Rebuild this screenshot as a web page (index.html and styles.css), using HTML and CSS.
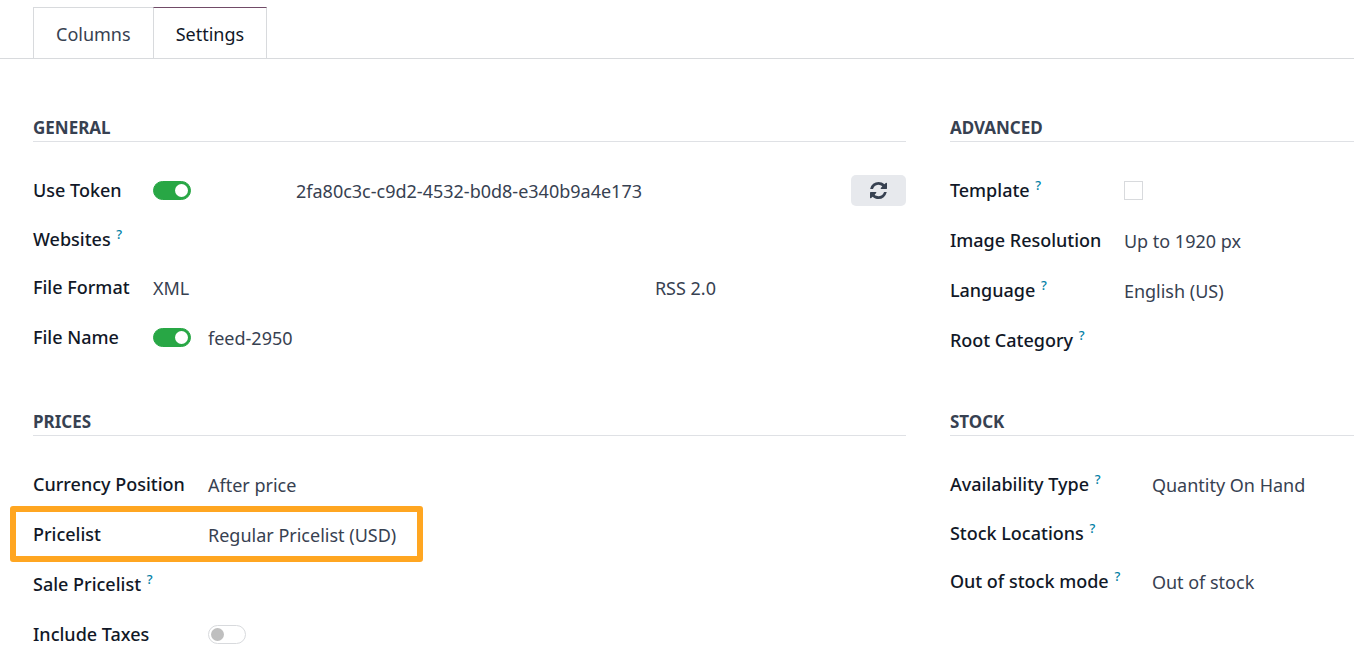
FILE: index.html
```html
<!DOCTYPE html>
<html lang="en">
  <head>
    <meta charset="UTF-8" />
    <meta name="viewport" content="width=device-width, initial-scale=1.0" />
    <title>Feed Settings</title>
    <link rel="stylesheet" href="styles.css">
  </head>
  <body>
    <nav class="tabs">
      <a href="#columns" class="tab">Columns</a>
      <a href="#settings" class="tab active">Settings</a>
    </nav>

    <main class="settings" id="settings">
      <section class="group general">
        <h2>General</h2>
        <div class="row">
          <label class="name" for="useToken">Use Token</label>
          <div class="token">
            <input type="checkbox" class="toggle" id="useToken" checked />
            <span class="value">2fa80c3c-c9d2-4532-b0d8-e340b9a4e173</span>
            <button class="refresh" type="button" aria-label="Refresh token">
              <svg viewBox="0 0 1536 1536" width="17" height="17" fill="currentColor">
                <path d="M1511 928q0 5-1 7-64 268-268 434.500t-478 166.500q-146 0-282.500-55t-243.500-157l-129 129q-19 19-45 19t-45-19-19-45v-448q0-26 19-45t45-19h448q26 0 45 19t19 45-19 45l-137 137q71 66 161 102t187 36q134 0 250-65t186-179q11-17 53-117 8-23 30-23h192q13 0 22.500 9.500t9.500 22.500zM1536 128v448q0 26-19 45t-45 19h-448q-26 0-45-19t-19-45 19-45l138-138q-148-137-349-137-134 0-250 65t-186 179q-11 17-53 117-8 23-30 23h-199q-13 0-22.500-9.500t-9.500-22.500v-7q65-268 270-434.500t480-166.500q146 0 284 55.500t245 156.500l130-129q19-19 45-19t45 19 19 45z" />
              </svg>
            </button>
          </div>
        </div>
        <div class="row short">
          <span class="name">Websites <sup>?</sup></span>
        </div>
        <div class="row">
          <span class="name">File Format</span>
          <div class="format">
            <span class="value">XML</span>
            <span class="value">RSS 2.0</span>
          </div>
        </div>
        <div class="row">
          <label class="name" for="fileName">File Name</label>
          <div class="file">
            <input type="checkbox" class="toggle" id="fileName" checked />
            <span class="value">feed-2950</span>
          </div>
        </div>
      </section>

      <section class="group advanced">
        <h2>Advanced</h2>
        <div class="row">
          <label class="name" for="template">Template <sup>?</sup></label>
          <input type="checkbox" class="check" id="template" />
        </div>
        <div class="row">
          <span class="name">Image Resolution</span>
          <span class="value">Up to 1920 px</span>
        </div>
        <div class="row">
          <span class="name">Language <sup>?</sup></span>
          <span class="value">English (US)</span>
        </div>
        <div class="row">
          <span class="name">Root Category <sup>?</sup></span>
        </div>
      </section>

      <section class="group prices">
        <h2>Prices</h2>
        <div class="row">
          <span class="name">Currency Position</span>
          <span class="value">After price</span>
        </div>
        <div class="row highlight">
          <span class="name">Pricelist</span>
          <span class="value">Regular Pricelist (USD)</span>
        </div>
        <div class="row">
          <span class="name">Sale Pricelist <sup>?</sup></span>
        </div>
        <div class="row">
          <label class="name" for="taxes">Include Taxes</label>
          <input type="checkbox" class="toggle" id="taxes" />
        </div>
      </section>

      <section class="group stock">
        <h2>Stock</h2>
        <div class="row">
          <span class="name">Availability Type <sup>?</sup></span>
          <span class="value">Quantity On Hand</span>
        </div>
        <div class="row short">
          <span class="name">Stock Locations <sup>?</sup></span>
        </div>
        <div class="row">
          <span class="name">Out of stock mode <sup>?</sup></span>
          <span class="value">Out of stock</span>
        </div>
      </section>
    </main>
  </body>
</html>
```

FILE: styles.css
```css
* {
  box-sizing: border-box;
}

body {
  margin: 0;
  font-family: "Noto Sans", "Open Sans", sans-serif;
  font-size: 18px;
  line-height: 24px;
  color: #374151;
  background-color: #ffffff;
  overflow-x: hidden;
}

/* Tabs */
.tabs {
  display: flex;
  padding: 7px 0 0 33px;
  border-bottom: 1px solid #d8dadd;
}

.tab {
  padding: 14px 22px 12px;
  border: 1px solid #d8dadd;
  border-width: 1px 0 0 1px;
  color: #374151;
  text-decoration: none;
}

.tab.active {
  border-right-width: 1px;
  border-top-color: #714b67;
  color: #111827;
}

/* Groups */
.settings {
  display: grid;
  grid-template-columns: 2.16fr 1fr;
  gap: 42px 44px;
  padding: 54px 0 0 33px;
}

.group {
  min-width: 0;
}

h2 {
  margin: 0 0 23px;
  padding: 3px 0 1px;
  border-bottom: 1px solid #dfe1e5;
  font-size: 17px;
  line-height: 24px;
  font-weight: 700;
  text-transform: uppercase;
}

.row {
  display: grid;
  grid-template-columns: 174px 1fr;
  align-items: center;
  height: 50px;
}

.row.short {
  height: 47px;
}

.general .row {
  grid-template-columns: 120px 1fr;
}

.prices .row {
  grid-template-columns: 175px 1fr;
}

.stock .row {
  grid-template-columns: 202px 1fr;
}

.name {
  color: #111827;
  font-weight: 500;
  white-space: nowrap;
}

.value {
  padding-top: 2px;
  white-space: nowrap;
}

sup {
  margin-left: 1px;
  color: #0180a5;
  font-size: 13px;
  line-height: 0;
}

.token {
  display: grid;
  grid-template-columns: 143px 1fr auto;
  align-items: center;
}

.format {
  display: grid;
  grid-template-columns: 2fr 1fr;
}

.file {
  display: flex;
  align-items: center;
  gap: 17px;
}

/* Controls */
.toggle {
  appearance: none;
  display: flex;
  align-items: center;
  width: 38px;
  height: 19px;
  margin: 0;
  padding: 0 2px;
  border: 1px solid #d8dadd;
  border-radius: 10px;
  background-color: #ffffff;
}

.toggle::before {
  content: "";
  width: 13px;
  height: 13px;
  border-radius: 50%;
  background-color: #bfbfbf;
}

.toggle:checked {
  justify-content: flex-end;
  border-color: #28a745;
  background-color: #28a745;
}

.toggle:checked::before {
  background-color: #ffffff;
}

.check {
  appearance: none;
  width: 19px;
  height: 19px;
  margin: 0;
  border: 1px solid #d8dadd;
  background-color: #ffffff;
}

.refresh {
  display: flex;
  align-items: center;
  justify-content: center;
  width: 55px;
  height: 31px;
  padding: 0;
  border: none;
  border-radius: 5px;
  background-color: #e7e9ed;
  color: #374151;
  cursor: pointer;
}

/* Frame around the pricelist row */
.highlight {
  position: relative;
}

.highlight::after {
  content: "";
  box-sizing: border-box;
  position: absolute;
  top: -3px;
  left: -23px;
  width: 413px;
  height: 56px;
  border: 6px solid #ffa621;
  border-radius: 3px;
}
```
